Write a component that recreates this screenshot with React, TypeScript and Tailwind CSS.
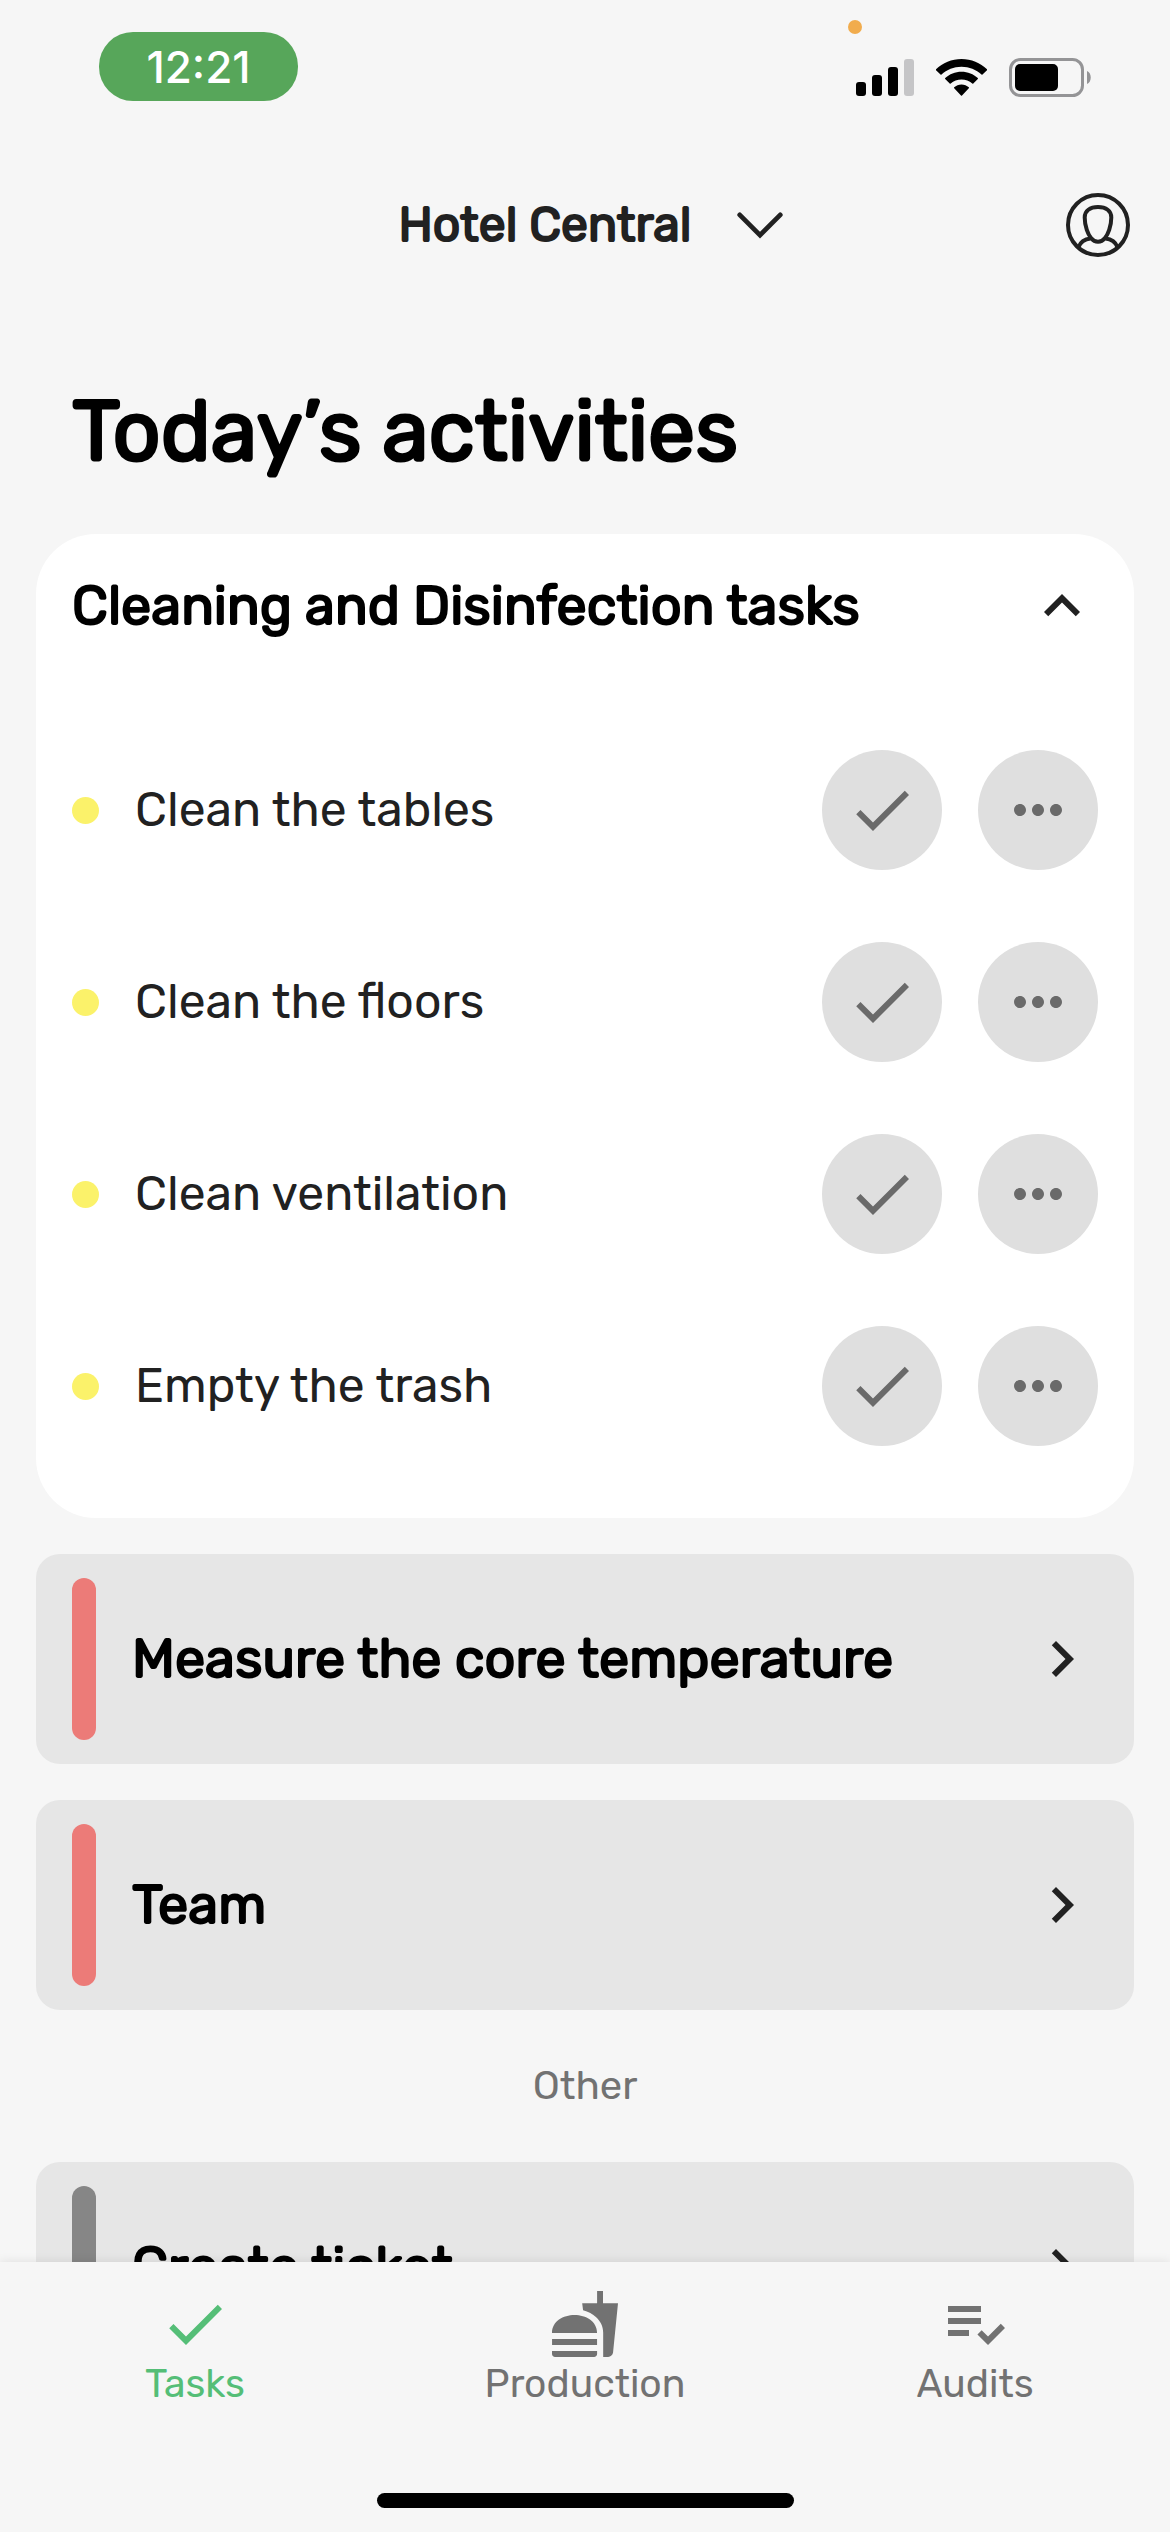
import { useState } from "react";
import {
  MdCheck,
  MdChevronRight,
  MdFastfood,
  MdKeyboardArrowDown,
  MdKeyboardArrowUp,
  MdMoreHoriz,
} from "react-icons/md";

interface GroupTypes {
  text: string;
  bar: string;
}

const Tasks: string[] = [
  "Clean the tables",
  "Clean the floors",
  "Clean ventilation",
  "Empty the trash",
];

const Groups: GroupTypes[] = [
  { text: "Measure the core temperature", bar: "bg-[#ec7b78]" },
  { text: "Team", bar: "bg-[#ec7b78]" },
];

const Other: GroupTypes[] = [{ text: "Create ticket", bar: "bg-[#868686]" }];

function PlaylistCheckSVG() {
  return (
    <svg viewBox="0 0 24 24" className="size-18" fill="currentColor">
      <path d="M3 10h11v2H3zM3 6h11v2H3zM3 14h7v2H3zM20.59 11.93l-4.25 4.24-2.12-2.12-1.41 1.41L16.34 19 22 13.34z" />
    </svg>
  );
}

function ProfileSVG() {
  return (
    <svg
      viewBox="0 0 66 66"
      className="size-[66px]"
      fill="none"
      stroke="currentColor"
      strokeWidth="4"
    >
      <circle cx="33" cy="33" r="30" />
      <path d="M33 15c8 0 13.3 4 13.3 10.500 0 9-3.500 17-6.300 20.500-4 5-10 5-14 0-2.800-3.500-6.300-11.500-6.300-20.500C19.7 19 25 15 33 15z" />
      <path d="M25.500 46.500c-6 .8-10 3.500-12 8.500M40.500 46.500c6 .8 10 3.500 12 8.500" />
    </svg>
  );
}

function StatusBar() {
  return (
    <div className="flex items-start justify-between pr-[78px] pl-[99px]">
      <span className="mt-8 flex h-[69px] w-[199px] items-center justify-center rounded-[34px] bg-[#57a65a] font-[Inter] text-[44px] font-medium text-white">
        12:21
      </span>
      <div className="pt-5">
        <div className="ml-[-8px] size-3.5 rounded-full bg-[#f1ac4d]" />
        <div className="mt-6 flex items-center gap-[22px]">
          <svg viewBox="0 0 58 37" className="h-[37px] w-[58px]">
            <rect y="23" width="10" height="14" rx="3" />
            <rect x="16" y="16" width="10" height="21" rx="3" />
            <rect x="32" y="8" width="10" height="29" rx="3" />
            <rect x="48" width="10" height="37" rx="3" fill="#c5c5c7" />
          </svg>
          <svg viewBox="0 0 51 37" className="h-[37px] w-[51px]">
            <path d="M25.500 0C35.300 0 44.300 3.800 51 10.200q.4.600 0 1L46.500 15.500q-.5.400-1 0C40.200 10.600 33.200 7.700 25.500 7.700S10.800 10.600 5.500 15.500q-.5.400-1 0L0 11.200q-.4-.4 0-1C6.700 3.800 15.700 0 25.500 0z" />
            <path d="M25.500 12.700c6.300 0 12 2.400 16.300 6.400q.4.500 0 1l-4.500 4.500q-.5.400-1 0c-2.900-2.600-6.700-4.100-10.800-4.100s-7.900 1.500-10.800 4.100q-.5.400-1 0L9.200 20.100q-.4-.5 0-1c4.300-4 10-6.400 16.300-6.400z" />
            <path d="M25.500 25.400c2.800 0 5.400 1.100 7.300 2.900q.5.500 0 1L26 36.600q-.5.500-1 0L18.200 29.300q-.5-.5 0-1c1.900-1.800 4.500-2.900 7.300-2.900z" />
          </svg>
          <svg viewBox="0 0 83 39" className="h-[39px] w-[83px]">
            <rect
              x="1.500"
              y="1.500"
              width="72"
              height="36"
              rx="10"
              fill="none"
              stroke="#949496"
              strokeWidth="3"
            />
            <rect x="6" y="6" width="43" height="27" rx="5" />
            <path d="M78 13c5 2 5 11 0 13z" fill="#949496" />
          </svg>
        </div>
      </div>
    </div>
  );
}

function Header() {
  return (
    <header className="grid grid-cols-[1fr_auto_1fr] items-center pt-[88px] pr-[39px] pl-[63px] text-[#212121]">
      <button className="col-start-2 flex items-center gap-8 text-5xl [-webkit-text-stroke:2px]">
        Hotel Central
        <svg
          viewBox="0 0 512 512"
          className="size-18"
          fill="none"
          stroke="currentColor"
          strokeWidth="34"
          strokeLinecap="round"
        >
          <path d="M112 184l144 144 144-144" />
        </svg>
      </button>
      <button className="justify-self-end" aria-label="Profile">
        <ProfileSVG />
      </button>
    </header>
  );
}

function TaskRow({ text }: { text: string }) {
  return (
    <li className="flex h-48 items-center">
      <span className="size-[27px] rounded-full bg-[#fbf26a]" />
      <span className="ml-9 flex-1 text-5xl text-[#212121]">{text}</span>
      <span className="flex gap-9 text-[#6a6a6a]">
        <button
          className="flex size-30 items-center justify-center rounded-full bg-[#dfdfdf]"
          aria-label={`Complete: ${text}`}
        >
          <MdCheck className="size-18" />
        </button>
        <button
          className="flex size-30 items-center justify-center rounded-full bg-[#dfdfdf]"
          aria-label={`More: ${text}`}
        >
          <MdMoreHoriz className="size-18" />
        </button>
      </span>
    </li>
  );
}

function GroupCard({ text, bar }: GroupTypes) {
  return (
    <button className="flex h-[210px] w-full shrink-0 items-center rounded-3xl bg-[#e6e6e6] px-9 py-6 text-left">
      <span className={`h-full w-6 rounded-full ${bar}`} />
      <span className="ml-9 flex-1 text-[54px] [-webkit-text-stroke:2px]">
        {text}
      </span>
      <MdChevronRight className="size-18 text-[#212121]" />
    </button>
  );
}

function BottomNav() {
  const tab = "flex flex-1 flex-col items-center text-[39px] leading-12";

  return (
    <nav className="z-10 shrink-0 bg-[#f6f6f6] pt-[26px] pb-6 text-[#727272] shadow-[0_0_10px_rgba(0,0,0,0.1)]">
      <div className="flex">
        <a href="#tasks" className={`${tab} text-[#55be77]`}>
          <MdCheck className="size-18" />
          Tasks
        </a>
        <a href="#production" className={tab}>
          <MdFastfood className="size-18" />
          Production
        </a>
        <a href="#audits" className={tab}>
          <PlaylistCheckSVG />
          Audits
        </a>
      </div>
      <div className="mx-auto mt-[85px] h-[15px] w-[417px] rounded-full bg-black" />
    </nav>
  );
}

function App() {
  const [open, setOpen] = useState(true);

  return (
    <div className="flex h-screen flex-col bg-[#f6f6f6] font-[Rubik,Roboto,sans-serif] text-black">
      <StatusBar />
      <Header />
      <main className="flex min-h-0 flex-1 flex-col gap-9 overflow-hidden px-9 pt-[120px]">
        <h1 className="mb-[17px] px-9 text-[84px] leading-[100px] [-webkit-text-stroke:3px]">
          Today’s activities
        </h1>
        <section className="shrink-0 rounded-[60px] bg-white px-9 pb-9">
          <h2>
            <button
              className="flex h-[144px] w-full items-center justify-between text-left text-[54px] [-webkit-text-stroke:2px]"
              aria-expanded={open}
              onClick={() => setOpen(!open)}
            >
              Cleaning and Disinfection tasks
              {open ? (
                <MdKeyboardArrowUp className="size-18 text-[#212121]" />
              ) : (
                <MdKeyboardArrowDown className="size-18 text-[#212121]" />
              )}
            </button>
          </h2>
          {open && (
            <ul className="pt-9">
              {Tasks.map((task) => (
                <TaskRow key={task} text={task} />
              ))}
            </ul>
          )}
        </section>
        {Groups.map((group) => (
          <GroupCard key={group.text} {...group} />
        ))}
        <h3 className="py-4 text-center text-[40px] leading-12 text-[#727272]">
          Other
        </h3>
        {Other.map((group) => (
          <GroupCard key={group.text} {...group} />
        ))}
      </main>
      <BottomNav />
    </div>
  );
}

export default App;
